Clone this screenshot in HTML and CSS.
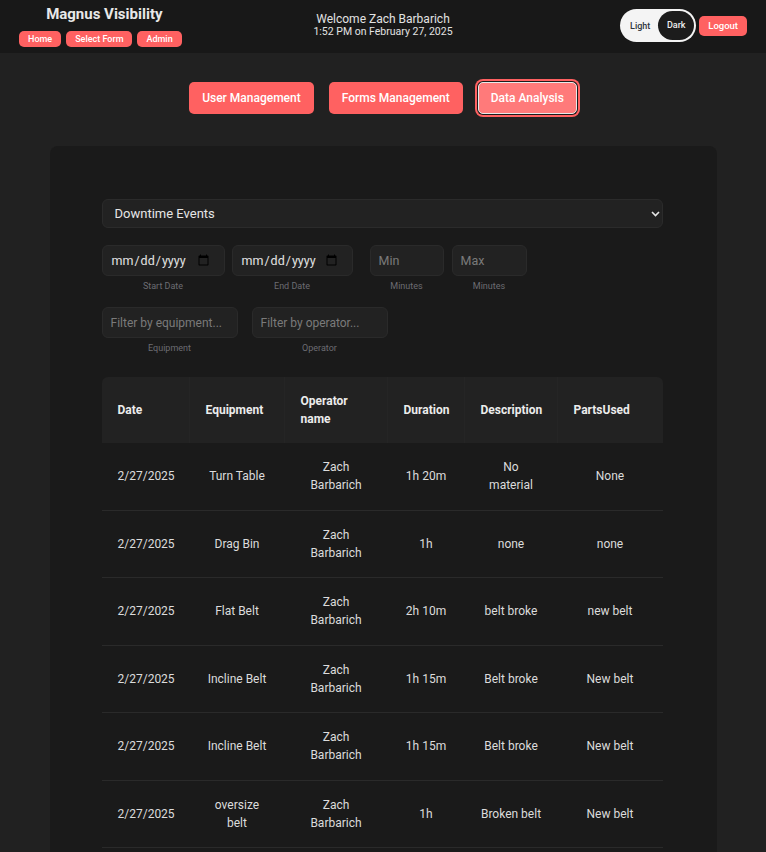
FILE: index.html
```html
<!DOCTYPE html>
<html lang="en">
<head>
<meta charset="utf-8">
<title>Magnus Visibility</title>
<link rel="stylesheet" href="styles.css">
</head>
<body>
<header class="topbar">
  <div class="brand">
    <div class="brand-title">Magnus Visibility</div>
    <nav class="brand-links">
      <button class="pill-btn">Home</button>
      <button class="pill-btn">Select Form</button>
      <button class="pill-btn">Admin</button>
    </nav>
  </div>
  <div class="welcome">
    <div class="welcome-name">Welcome Zach Barbarich</div>
    <div class="welcome-time">1:52 PM on February 27, 2025</div>
  </div>
  <div class="top-actions">
    <div class="theme-toggle">
      <span class="theme-opt">Light</span>
      <span class="theme-opt active">Dark</span>
    </div>
    <button class="pill-btn logout">Logout</button>
  </div>
</header>

<main class="page">
  <div class="tabs">
    <button class="tab">User Management</button>
    <button class="tab">Forms Management</button>
    <button class="tab active">Data Analysis</button>
  </div>

  <section class="card">
    <div class="select-wrap">
      <select class="select">
        <option>Downtime Events</option>
      </select>
      <svg class="chevron" width="9" height="6" viewBox="0 0 9 6"><path d="M1 1l3.5 3.5L8 1" fill="none" stroke="#e6e6e6" stroke-width="1.6"/></svg>
    </div>

    <div class="filter-row first">
      <div class="group">
        <div class="field"><input class="input date" type="date"><span class="hint">Start Date</span></div>
        <div class="field"><input class="input date narrow" type="date"><span class="hint">End Date</span></div>
      </div>
      <div class="group">
        <div class="field"><input class="input num" type="number" placeholder="Min"><span class="hint">Minutes</span></div>
        <div class="field"><input class="input num max" type="number" placeholder="Max"><span class="hint">Minutes</span></div>
      </div>
    </div>

    <div class="filter-row second">
      <div class="field"><input class="input text" type="text" placeholder="Filter by equipment..."><span class="hint">Equipment</span></div>
      <div class="field"><input class="input text" type="text" placeholder="Filter by operator..."><span class="hint">Operator</span></div>
    </div>

    <table class="data">
      <colgroup>
        <col class="c-date"><col class="c-equip"><col class="c-op"><col class="c-dur"><col class="c-desc"><col class="c-parts">
      </colgroup>
      <thead>
        <tr><th>Date</th><th>Equipment</th><th>Operator name</th><th>Duration</th><th>Description</th><th>PartsUsed</th></tr>
      </thead>
      <tbody>
        <tr><td>2/27/2025</td><td>Turn Table</td><td>Zach Barbarich</td><td>1h 20m</td><td>No material</td><td>None</td></tr>
        <tr><td>2/27/2025</td><td>Drag Bin</td><td>Zach Barbarich</td><td>1h</td><td>none</td><td>none</td></tr>
        <tr><td>2/27/2025</td><td>Flat Belt</td><td>Zach Barbarich</td><td>2h 10m</td><td>belt broke</td><td>new belt</td></tr>
        <tr><td>2/27/2025</td><td>Incline Belt</td><td>Zach Barbarich</td><td>1h 15m</td><td>Belt broke</td><td>New belt</td></tr>
        <tr><td>2/27/2025</td><td>Incline Belt</td><td>Zach Barbarich</td><td>1h 15m</td><td>Belt broke</td><td>New belt</td></tr>
        <tr><td>2/27/2025</td><td>oversize belt</td><td>Zach Barbarich</td><td>1h</td><td>Broken belt</td><td>New belt</td></tr>
      </tbody>
    </table>
  </section>
</main>
</body>
</html>
```

FILE: styles.css
```css
* { box-sizing: border-box; }

html, body {
  margin: 0;
  padding: 0;
  background: #212121;
  font-family: Roboto, "Liberation Sans", Arial, sans-serif;
  color: #e6e6e6;
}

button { font-family: inherit; cursor: pointer; }

/* ---------- top bar ---------- */
.topbar {
  display: grid;
  grid-template-columns: 1fr auto 1fr;
  align-items: start;
  height: 53px;
  padding: 0 19px;
  background: #181818;
}

.brand {
  justify-self: start;
  display: flex;
  flex-direction: column;
  align-items: center;
  padding-top: 4px;
}

.brand-title {
  padding-left: 8px;
  font-size: 15px;
  line-height: 20px;
  font-weight: 700;
  color: #e8e8e8;
}

.brand-links {
  display: flex;
  gap: 5px;
  margin-top: 7px;
}

.pill-btn {
  height: 16px;
  padding: 0 9px;
  border: none;
  border-radius: 5px;
  background: #ff6161;
  color: #fff;
  font-size: 9px;
  font-weight: 500;
  line-height: 16px;
}

.welcome {
  padding-top: 12px;
  text-align: center;
  color: #e2e2e2;
}

.welcome-name { font-size: 12px; line-height: 14px; }
.welcome-time { font-size: 10.5px; line-height: 12px; }

.top-actions {
  justify-self: end;
  display: flex;
  align-items: center;
  gap: 3px;
  padding-top: 9px;
}

.theme-toggle {
  display: flex;
  align-items: center;
  width: 76px;
  height: 33px;
  padding: 2px;
  border-radius: 17px;
  background: #f4f4f4;
}

.theme-opt {
  flex: 1;
  text-align: center;
  font-size: 9px;
  font-weight: 500;
  color: #2f3440;
}

.theme-opt.active {
  flex: 0 0 36px;
  height: 29px;
  line-height: 29px;
  border-radius: 15px;
  background: #1c1c1c;
  color: #eee;
}

.logout {
  height: 20px;
  line-height: 20px;
  padding: 0 9px;
  font-size: 9.5px;
}

/* ---------- tabs ---------- */
.page { padding-top: 29px; }

.tabs {
  display: flex;
  justify-content: center;
  gap: 15px;
}

.tab {
  height: 32px;
  padding: 0 12px;
  border: 1px solid transparent;
  border-radius: 5px;
  background: #ff6161;
  color: #fff;
  font-size: 12px;
  font-weight: 500;
}

.tab.active {
  background: #ff7a7a;
  border-color: #e9e9e9;
  box-shadow: 0 0 0 1px #1b1b1b, 0 0 0 3px #ff6161;
}

/* ---------- card ---------- */
.card {
  width: 667px;
  margin: 32px auto 0;
  padding: 53px 54px 40px 52px;
  background: #1a1a1a;
  border-radius: 8px;
}

.select-wrap { position: relative; }

.select {
  display: block;
  width: 100%;
  height: 29px;
  padding: 0 12px;
  appearance: none;
  -webkit-appearance: none;
  border: 1px solid #2b2b2b;
  border-radius: 6px;
  background: #222;
  color: #e6e6e6;
  font-family: inherit;
  font-size: 13px;
  outline: none;
}

.chevron {
  position: absolute;
  right: 3px;
  top: 12px;
}

.filter-row {
  display: flex;
  align-items: flex-start;
}

.filter-row.first { margin-top: 17px; gap: 17px; }
.filter-row.second { margin-top: 15px; gap: 14px; }

.group { display: flex; gap: 7px; }
.group + .group { gap: 8px; }

.field {
  display: flex;
  flex-direction: column;
  align-items: center;
}

.input {
  height: 31px;
  padding: 0 8px;
  border: 1px solid #2a2a2a;
  border-radius: 6px;
  background: #222;
  color: #e2e2e2;
  font-family: inherit;
  font-size: 12px;
  outline: none;
}

.input::placeholder { color: #7a7a7a; }

.input.date { width: 123px; font-size: 12.5px; padding-right: 12px; }
.input.date.narrow { width: 121px; }
.input.num { width: 74px; font-size: 12.5px; -moz-appearance: textfield; }
.input.num.max { width: 75px; }
.input.num::-webkit-inner-spin-button,
.input.num::-webkit-outer-spin-button { -webkit-appearance: none; margin: 0; }
.input.text { width: 136px; }

.hint {
  margin-top: 5px;
  font-size: 9px;
  line-height: 11px;
  color: #6c6c72;
}

/* ---------- table ---------- */
.data {
  width: 100%;
  margin-top: 23px;
  border-collapse: separate;
  border-spacing: 0;
  table-layout: fixed;
  font-size: 12px;
}

.c-date { width: 88px; }
.c-equip { width: 95px; }
.c-op { width: 103px; }
.c-dur { width: 77px; }
.c-desc { width: 93px; }
.c-parts { width: 105px; }

.data th {
  padding: 15px 16px;
  background: #222;
  text-align: left;
  font-weight: 700;
  color: #ececec;
  line-height: 18px;
  border-right: 1px solid #252525;
}

.data th:first-child { border-top-left-radius: 6px; }
.data th:last-child { border-top-right-radius: 6px; border-right: none; }

.data td {
  padding: 15.25px 16px;
  text-align: center;
  line-height: 18px;
  color: #dcdcdc;
  border-bottom: 1px solid #2a2a2a;
}
```
